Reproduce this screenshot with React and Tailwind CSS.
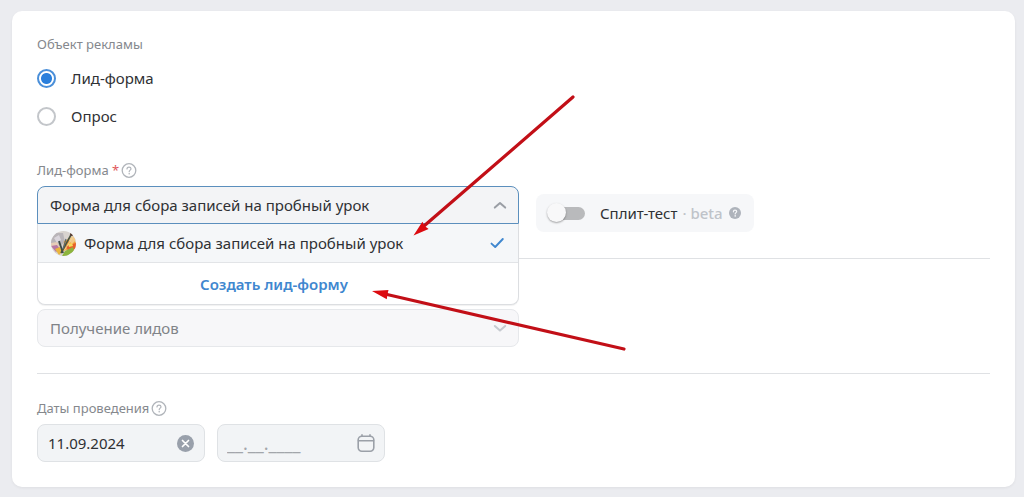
import React from "react";

function HelpIcon() {
  return (
    <svg className="h-4 w-4 shrink-0" viewBox="0 0 16 16" fill="none" stroke="#b0b4ba" aria-hidden="true">
      <circle cx="8" cy="7.5" r="6.8" strokeWidth="1.3" />
      <path d="M6 6c0-1.2.9-1.9 2-1.9s2 .7 2 1.7c0 1.3-1.8 1.4-1.8 2.9" strokeWidth="1.2" strokeLinecap="round" />
      <circle cx="8.2" cy="10.8" r=".8" fill="#b0b4ba" stroke="none" />
    </svg>
  );
}

function HelpSolidIcon() {
  return (
    <svg className="h-3 w-3 shrink-0" viewBox="0 0 12 12" fill="none" aria-hidden="true">
      <circle cx="6" cy="6" r="6" fill="#aeb3bb" />
      <path d="M4.4 4.8c0-1 .7-1.6 1.6-1.6s1.7.5 1.7 1.4c0 1-1.5 1.1-1.5 2.3" stroke="#f5f6f8" strokeWidth="1.2" strokeLinecap="round" />
      <circle cx="6.2" cy="8.9" r=".8" fill="#f5f6f8" />
    </svg>
  );
}

function Chevron({ up }) {
  return (
    <svg
      className="pointer-events-none mr-[11px] h-4 w-4 shrink-0 self-center justify-self-end [grid-area:1/1]"
      viewBox="0 0 16 16"
      fill="none"
      stroke={up ? "#9a9ea5" : "#c6cad0"}
      strokeWidth="2"
      strokeLinecap="round"
      strokeLinejoin="round"
      aria-hidden="true"
    >
      <path d={up ? "M2.8 10.6 8 6l5.2 4.6" : "M2.8 6 8 10.6 13.2 6"} />
    </svg>
  );
}

function PaintAvatar() {
  return (
    <svg className="h-[25px] w-[25px] shrink-0" viewBox="0 0 25 25" aria-hidden="true">
      <defs>
        <clipPath id="avatar">
          <circle cx="12.5" cy="12.5" r="12.5" />
        </clipPath>
        <filter id="paint">
          <feGaussianBlur stdDeviation=".7" />
        </filter>
      </defs>
      <g clipPath="url(#avatar)">
        <rect width="25" height="25" fill="#d8d3cf" />
        <g filter="url(#paint)">
          <path d="M0 2h12l2 9-6 5-8-3z" fill="#b9b5b9" />
          <path d="M3 7l5-3 2 5-4 3z" fill="#d9d5dc" />
          <path d="M0 12l6-1 3 5-4 3-5-4z" fill="#e6cdb8" />
          <path d="M0 15l6-1 3 4-4 3z" fill="#b878a4" />
          <path d="M4 18l5-2 2 5-3 3z" fill="#e9b53c" />
          <path d="M13 10l9-4 3 6-6 6-7 2z" fill="#f4a23c" />
          <path d="M16 8l6-3 3 4-4 4z" fill="#f3c987" />
          <path d="M15 15l10-3v5l-7 5z" fill="#e8602c" />
          <path d="M14 20l8-4 1 4-7 5h-5z" fill="#8cb43c" />
          <path d="M17 13l4-1 1 3-4 1z" fill="#f7d95c" />
        </g>
        <path d="M8 10l4 12" stroke="#3e4a46" strokeWidth="1.8" />
        <path d="M20.5 3L10 22" stroke="#49523f" strokeWidth="1.6" />
        <path d="M22 6L13.5 19" stroke="#e8d8a8" strokeWidth=".8" />
        <path d="M15 8l-3 10" stroke="#5b6b70" strokeWidth="1.2" />
        <circle cx="20.6" cy="3.4" r="1.6" fill="#5d4238" />
      </g>
    </svg>
  );
}

function PointerArrows() {
  return (
    <svg className="pointer-events-none absolute left-0 top-0 z-20 h-[360px] w-[640px]" viewBox="0 0 640 360" fill="none" aria-hidden="true">
      <g stroke="#c20f17" strokeWidth="3.2" strokeLinecap="round">
        <path d="M573 97 424 226" />
        <path d="M624 349 386 294.3" />
      </g>
      <path d="M413.5 235.5 422.4 221.8 424.6 226 428.6 229z" fill="#dc0b10" />
      <path d="M372 291 388.5 290 387.4 294.6 386.8 299.2z" fill="#dc0b10" />
    </svg>
  );
}

function Radio({ label, defaultChecked }) {
  return (
    <label className="flex h-6 items-center gap-[15px] text-[15px]">
      <input
        type="radio"
        name="object"
        defaultChecked={defaultChecked}
        className="m-0 h-[19px] w-[19px] appearance-none rounded-full border-2 border-[#c3c6ca] bg-white checked:border-[#4a8fd9] checked:bg-[radial-gradient(circle,#2a7fdc_5px,#ffffff_6px)]"
      />
      {label}
    </label>
  );
}

const labelClass = "flex h-5 items-center gap-[2px] text-[13px] text-[#85888d]";

export default function App() {
  return (
    <main className="relative min-h-screen bg-[#ebecf0] pb-[10px] pl-3 pr-[9px] pt-[11px] font-['Noto_Sans','Open_Sans',sans-serif] text-[#2f3134]">
      <form className="rounded-[10px] bg-white px-[25px] pb-[25px] pt-6 shadow-[0_1px_3px_rgba(0,0,0,0.06)]">
        <fieldset>
          <legend className={labelClass}>Объект рекламы</legend>
          <div className="mt-[11px] flex flex-col gap-[14px]">
            <Radio label="Лид-форма" defaultChecked />
            <Radio label="Опрос" />
          </div>
        </fieldset>

        <div className={"mt-[33px] " + labelClass}>
          <label htmlFor="lead-form">
            Лид-форма <span className="text-[#e0575b]">*</span>
          </label>
          <HelpIcon />
        </div>
        <div className="mt-[5px] flex items-start gap-[17px]">
          <div className="relative w-[482px]">
            <div className="grid">
              <select
                id="lead-form"
                className="h-[38px] w-full appearance-none rounded-t-[8px] border border-[#5b8fbd] bg-[#f3f4f6] px-3 text-[15px] outline-none [grid-area:1/1]"
              >
                <option>Форма для сбора записей на пробный урок</option>
              </select>
              <Chevron up />
            </div>
            <div className="absolute left-0 right-0 top-full z-10 overflow-hidden rounded-b-[8px] border border-t-0 border-[#dcdee1] bg-white shadow-[0_1px_1px_rgba(0,0,0,0.06)]">
              <ul role="listbox" aria-labelledby="lead-form">
                <li
                  role="option"
                  aria-selected="true"
                  className="flex h-[39px] items-center gap-2 border-b border-[#e2e4e7] bg-[#f5f7f9] pl-[13px] pr-[13px] text-[15px]"
                >
                  <PaintAvatar />
                  <span className="flex-1">Форма для сбора записей на пробный урок</span>
                  <svg className="h-4 w-4" viewBox="0 0 16 16" fill="none" stroke="#3f87cf" strokeWidth="1.9" strokeLinecap="round" strokeLinejoin="round" aria-hidden="true">
                    <path d="M2.5 8.6 6.2 12 13.8 4" />
                  </svg>
                </li>
              </ul>
              <button type="button" className="flex h-[41px] w-full items-center justify-center pr-2 pt-[2px] text-[15px] font-semibold text-[#3f87cf]">
                Создать лид-форму
              </button>
            </div>
          </div>
          <div className="mt-2 flex h-[38px] w-[218px] items-center rounded-[8px] bg-[#f6f7f9]">
            <label className="flex items-center pl-[11px] text-[15px]">
              <span className="relative mr-[15px] flex h-5 w-[38px] items-center">
                <input type="checkbox" role="switch" className="m-0 ml-2 h-[13px] w-[30px] appearance-none rounded-full bg-[#b9babc]" />
                <span className="absolute left-0 top-0 h-[19px] w-[19px] rounded-full bg-[#f8f8f9] shadow-[0_1px_2px_rgba(0,0,0,0.35)]" />
              </span>
              Сплит-тест
            </label>
            <span className="ml-[5px] mr-[6px] text-[15px] font-medium text-[#bfc3c9]">· beta</span>
            <HelpSolidIcon />
          </div>
        </div>

        <hr className="mt-[26px] border-[#dfe1e4]" />

        <div className="mt-[50px] grid w-[482px]">
          <select
            disabled
            aria-label="Получение лидов"
            className="h-[38px] w-full appearance-none rounded-[8px] border border-[#e6e8eb] bg-[#f7f7f9] px-3 text-[15px] text-[#808388] opacity-100 [grid-area:1/1]"
          >
            <option>Получение лидов</option>
          </select>
          <Chevron />
        </div>

        <hr className="mt-[26px] border-[#dfe1e4]" />

        <div className={"mt-[25px] " + labelClass}>
          <label htmlFor="date-from">Даты проведения</label>
          <HelpIcon />
        </div>
        <div className="mt-[5px] flex gap-3">
          <div className="flex h-[38px] w-[168px] items-center rounded-[8px] border border-[#dfe2e5] bg-[#f2f4f6] pl-[10px] pr-[10px]">
            <input id="date-from" type="text" defaultValue="11.09.2024" className="min-w-0 flex-1 bg-transparent text-[15px] outline-none" />
            <button type="button" aria-label="Очистить">
              <svg className="block h-[17px] w-[17px]" viewBox="0 0 17 17" aria-hidden="true">
                <circle cx="8.5" cy="8.5" r="8.5" fill="#99a0ab" />
                <path d="m5.5 5.5 6 6m0-6-6 6" stroke="#fff" strokeWidth="1.7" strokeLinecap="round" />
              </svg>
            </button>
          </div>
          <div className="flex h-[38px] w-[168px] items-center rounded-[8px] border border-[#dfe2e5] bg-[#f2f4f6] pl-[9px] pr-[9px]">
            <input type="text" aria-label="Дата окончания" placeholder="__.__.____" className="min-w-0 flex-1 bg-transparent text-[18px] outline-none placeholder:text-[#a3a6ab]" />
            <button type="button" aria-label="Календарь">
              <svg className="block h-[18px] w-[18px]" viewBox="0 0 18 18" fill="none" stroke="#9ba0a8" strokeWidth="1.6" strokeLinecap="round" aria-hidden="true">
                <rect x="1.2" y="2.2" width="15.6" height="15" rx="3.6" />
                <path d="M1.5 6.8h15M5 .9v1.3M13 .9v1.3" />
              </svg>
            </button>
          </div>
        </div>
      </form>
      <PointerArrows />
    </main>
  );
}
